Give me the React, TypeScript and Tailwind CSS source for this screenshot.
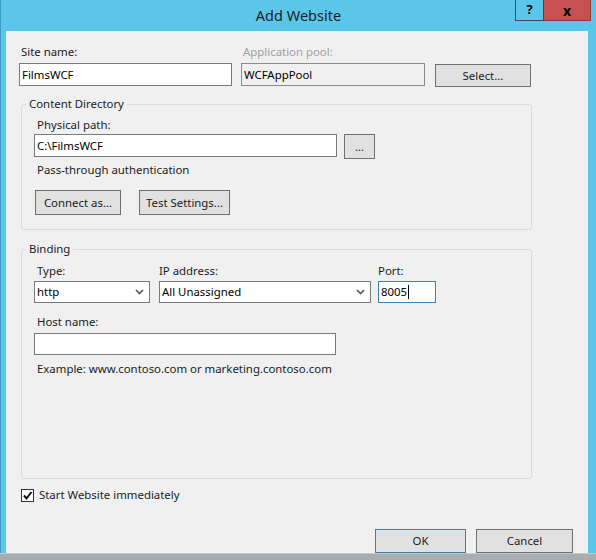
import React from "react";

const font = { fontFamily: '"Noto Sans", "Open Sans", sans-serif' };

function Label({ children, muted, flush }: { children: React.ReactNode; muted?: boolean; flush?: boolean }) {
  return (
    <div className={`h-4 leading-4 ${flush ? "" : "pl-[2px]"} ${muted ? "text-[#a0a0a0]" : "text-[#1b1b1b]"}`}>
      {children}
    </div>
  );
}

function Chevron() {
  return (
    <svg width="9" height="6" viewBox="0 0 9 6" className="shrink-0">
      <path d="M1 1 L4.5 4.5 L8 1" fill="none" stroke="#555" strokeWidth="1.6" />
    </svg>
  );
}

function Select({ value, w }: { value: string; w: string }) {
  return (
    <div className={`${w} h-[22px] bg-white border border-[#7a7a7a] flex items-center justify-between pl-[2px] pr-[5px]`}>
      <span>{value}</span>
      <Chevron />
    </div>
  );
}

function Button({ children, w, h = "h-[25px]", accent }: { children: React.ReactNode; w: string; h?: string; accent?: boolean }) {
  return (
    <div
      className={`${w} ${h} flex items-center justify-center bg-[#e1e1e1] border ${
        accent ? "border-[#3c7fb1]" : "border-[#707070]"
      } text-[#1b1b1b]`}
    >
      {children}
    </div>
  );
}

export default function App() {
  return (
    <div className="w-[596px] h-[560px] bg-[#5cc6e9] flex flex-col text-[11.4px] overflow-hidden" style={font}>
      {/* title bar */}
      <div className="h-[31px] grid grid-cols-[1fr_auto_1fr] border-l border-[#3b9ec4]">
        <div />
        <div className="self-center text-[14.5px] leading-5 text-[#1e1e1e] mb-[2px]">Add Website</div>
        <div className="flex justify-end items-start pr-[5px]">
          <div className="w-[29px] h-[21px] border-l border-b border-r border-[#3a4a52] flex items-center justify-center font-bold text-[13px] text-black">
            ?
          </div>
          <div className="w-[47px] h-[21px] bg-[#c75050] border-b border-r border-[#8a3a36] flex items-center justify-center font-bold text-[14px] text-black">
            x
          </div>
        </div>
      </div>

      <div className="flex h-[522px]">
        <div className="w-[6px] border-l border-[#3b9ec4]" />
        <div className="w-[582px] bg-[#f0f0f0] flex flex-col pl-[13px] pt-[13px]">
          {/* row 1 */}
          <div className="flex items-start">
            <div className="w-[213px]">
              <Label>Site name:</Label>
              <div className="mt-[3px] h-[23px] bg-white border border-[#7a7a7a] flex items-center pl-[2px]">FilmsWCF</div>
            </div>
            <div className="w-[184px] ml-[9px]">
              <Label muted>Application pool:</Label>
              <div className="mt-[3px] h-[23px] bg-[#f0f0f0] border border-[#8a8a8a] flex items-center pl-[2px]">WCFAppPool</div>
            </div>
            <div className="ml-[10px] mt-[20px]">
              <Button w="w-[96px]" h="h-[23px]">Select...</Button>
            </div>
          </div>

          {/* content directory */}
          <fieldset className="mt-[9px] ml-[2px] w-[511px] border border-[#d6dbe0] rounded-[3px] pl-[12px] pb-[14px]">
            <legend className="ml-[-8px] px-[3px] h-4 leading-4 text-[#1b1b1b]">Content Directory</legend>
            <div className="mt-[5px] pl-[1px]">
              <Label>Physical path:</Label>
            </div>
            <div className="mt-[1px] flex items-start">
              <div className="w-[303px] h-[23px] bg-white border border-[#7a7a7a] flex items-center pl-[2px]">C:\FilmsWCF</div>
              <div className="ml-[7px]">
                <Button w="w-[31px]">...</Button>
              </div>
            </div>
            <div className="mt-[3px] pl-[1px]">
              <Label>Pass-through authentication</Label>
            </div>
            <div className="mt-[12px] flex pl-[1px]">
              <Button w="w-[86px]">Connect as...</Button>
              <div className="ml-[18px]">
                <Button w="w-[91px]">Test Settings...</Button>
              </div>
            </div>
          </fieldset>

          {/* binding */}
          <fieldset className="mt-[11px] ml-[2px] w-[511px] h-[239px] border border-[#d6dbe0] rounded-[3px] pl-[12px]">
            <legend className="ml-[-8px] px-[3px] h-4 leading-4 text-[#1b1b1b]">Binding</legend>
            <div className="mt-[6px] flex items-start">
              <div className="w-[116px]">
                <div className="pl-[1px]">
                  <Label>Type:</Label>
                </div>
                <div className="mt-[2px]">
                  <Select value="http" w="w-[116px]" />
                </div>
              </div>
              <div className="ml-[9px] w-[212px]">
                <Label flush>IP address:</Label>
                <div className="mt-[2px]">
                  <Select value="All Unassigned" w="w-[212px]" />
                </div>
              </div>
              <div className="ml-[7px] w-[58px]">
                <Label flush>Port:</Label>
                <div className="mt-[2px] h-[22px] bg-white border border-[#3c7fb1] flex items-center pl-[2px]">
                  <span>8005</span>
                  <span className="w-px h-[14px] bg-black ml-[1px]" />
                </div>
              </div>
            </div>
            <div className="mt-[11px] pl-[1px]">
              <Label>Host name:</Label>
            </div>
            <div className="mt-[3px] w-[302px] h-[22px] bg-white border border-[#7a7a7a]" />
            <div className="mt-[6px] pl-[1px]">
              <Label>Example: www.contoso.com or marketing.contoso.com</Label>
            </div>
          </fieldset>

          {/* checkbox */}
          <div className="mt-[8px] ml-[2px] h-4 flex items-center">
            <div className="w-[13px] h-[13px] bg-white border border-[#333] flex items-center justify-center">
              <svg width="11" height="11" viewBox="0 0 11 11">
                <path d="M2 5.5 L4.5 8.5 L9.5 2" fill="none" stroke="#111" strokeWidth="2" />
              </svg>
            </div>
            <span className="ml-[5px] text-[#1b1b1b]">Start Website immediately</span>
          </div>

          {/* footer buttons */}
          <div className="mt-[26px] flex justify-end pr-[15px]">
            <Button w="w-[91px]" h="h-[24px]" accent>
              OK
            </Button>
            <div className="ml-[10px]">
              <Button w="w-[97px]" h="h-[24px]">Cancel</Button>
            </div>
          </div>
        </div>
        <div className="w-[8px]" />
      </div>
      <div className="flex-1 bg-[#a9adb0] border-t border-[#c8c8c8]" />
    </div>
  );
}
